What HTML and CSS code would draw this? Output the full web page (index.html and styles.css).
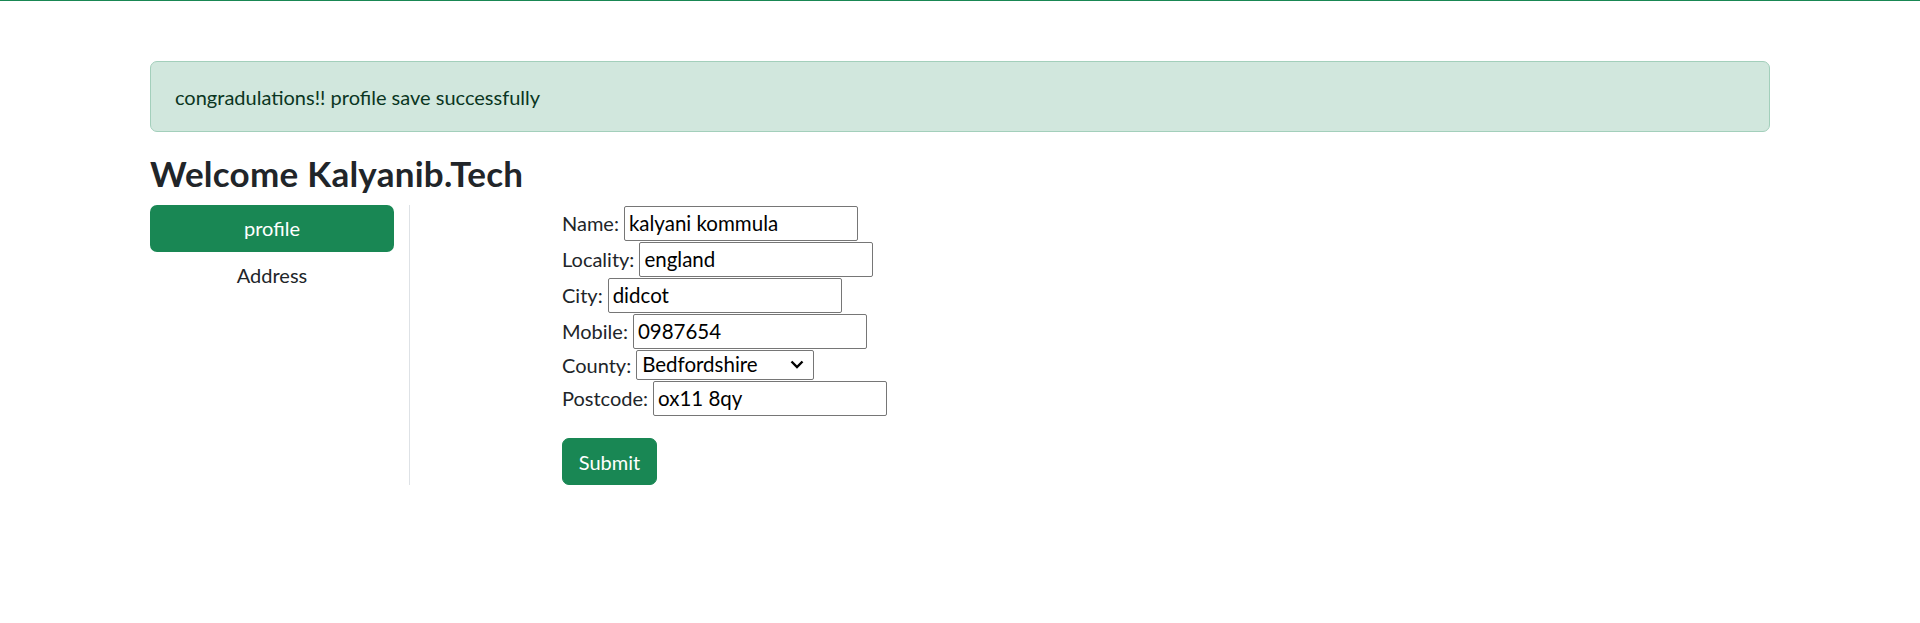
FILE: index.html
```html
<!DOCTYPE html>
<html lang="en">
<head>
<meta charset="utf-8">
<title>Profile</title>
<link rel="stylesheet" href="styles.css">
</head>
<body>
<div class="topline"></div>
<div class="container">
  <div class="alert">congradulations!! profile save successfully</div>
  <h3 class="title">Welcome Kalyanib.Tech</h3>
  <div class="row">
    <div class="side">
      <a class="pill active" href="#">profile</a>
      <a class="pill" href="#">Address</a>
    </div>
    <div class="main">
      <form class="form">
        <div class="line"><label>Name:</label><input class="field" type="text" value="kalyani kommula"></div>
        <div class="line"><label>Locality:</label><input class="field" type="text" value="england"></div>
        <div class="line"><label>City:</label><input class="field" type="text" value="didcot"></div>
        <div class="line"><label>Mobile:</label><input class="field" type="text" value="0987654"></div>
        <div class="line sel"><label>County:</label><span class="select"><span>Bedfordshire</span><svg width="14" height="9" viewBox="0 0 14 9"><path d="M1.5 1.5 L7 7 L12.5 1.5" fill="none" stroke="#000" stroke-width="2.4"/></svg></span></div>
        <div class="line"><label>Postcode:</label><input class="field" type="text" value="ox11 8qy"></div>
        <button class="btn" type="button">Submit</button>
      </form>
    </div>
  </div>
</div>
</body>
</html>
```
FILE: styles.css
```css
* { box-sizing: border-box; }
html, body { margin: 0; padding: 0; background: #fff; }
body {
  font-family: Lato, "Open Sans", sans-serif;
  font-size: 20px;
  line-height: 1.5;
  color: #212529;
}
.topline { height: 1px; background: #198754; }
.container {
  width: 1620px;
  margin: 60px auto 0;
}
.alert {
  height: 71px;
  padding: 20px 24px;
  line-height: 30px;
  background: #d1e7dd;
  border: 1px solid #a3cfbb;
  border-radius: 7px;
  color: #0a3622;
  margin-bottom: 20px;
}
.title {
  margin: 0 0 11px;
  font-size: 35px;
  line-height: 42px;
  font-weight: 700;
  letter-spacing: 0.25px;
  color: #212529;
}
.row { display: flex; }
.side {
  width: 260px;
  border-right: 1px solid #dee2e6;
  padding-right: 15px;
  display: flex;
  flex-direction: column;
}
.pill {
  display: block;
  height: 47px;
  line-height: 47px;
  text-align: center;
  text-decoration: none;
  color: #212529;
  border-radius: 7px;
}
.pill.active { background: #198754; color: #fff; }
.main { padding-left: 152px; }
.form { display: flex; flex-direction: column; align-items: flex-start; }
.line { display: flex; align-items: center; height: 36px; }
.line.sel { height: 31px; }
.line label { margin-right: 5px; }
.field {
  width: 234px;
  height: 35px;
  border: 1px solid #767676;
  border-radius: 2px;
  padding: 1px 4px;
  font: inherit;
  font-size: 20.5px;
  color: #000;
  background: #fff;
}
.select {
  display: flex;
  align-items: center;
  justify-content: space-between;
  width: 178px;
  height: 30px;
  border: 1px solid #767676;
  border-radius: 2px;
  padding: 0 9px 0 5px;
  font-size: 20.5px;
  color: #000;
}
.btn {
  margin-top: 22px;
  width: 95px;
  height: 47px;
  border: 1px solid #198754;
  border-radius: 7px;
  background: #198754;
  color: #fff;
  font: inherit;
  padding: 0;
}
```
